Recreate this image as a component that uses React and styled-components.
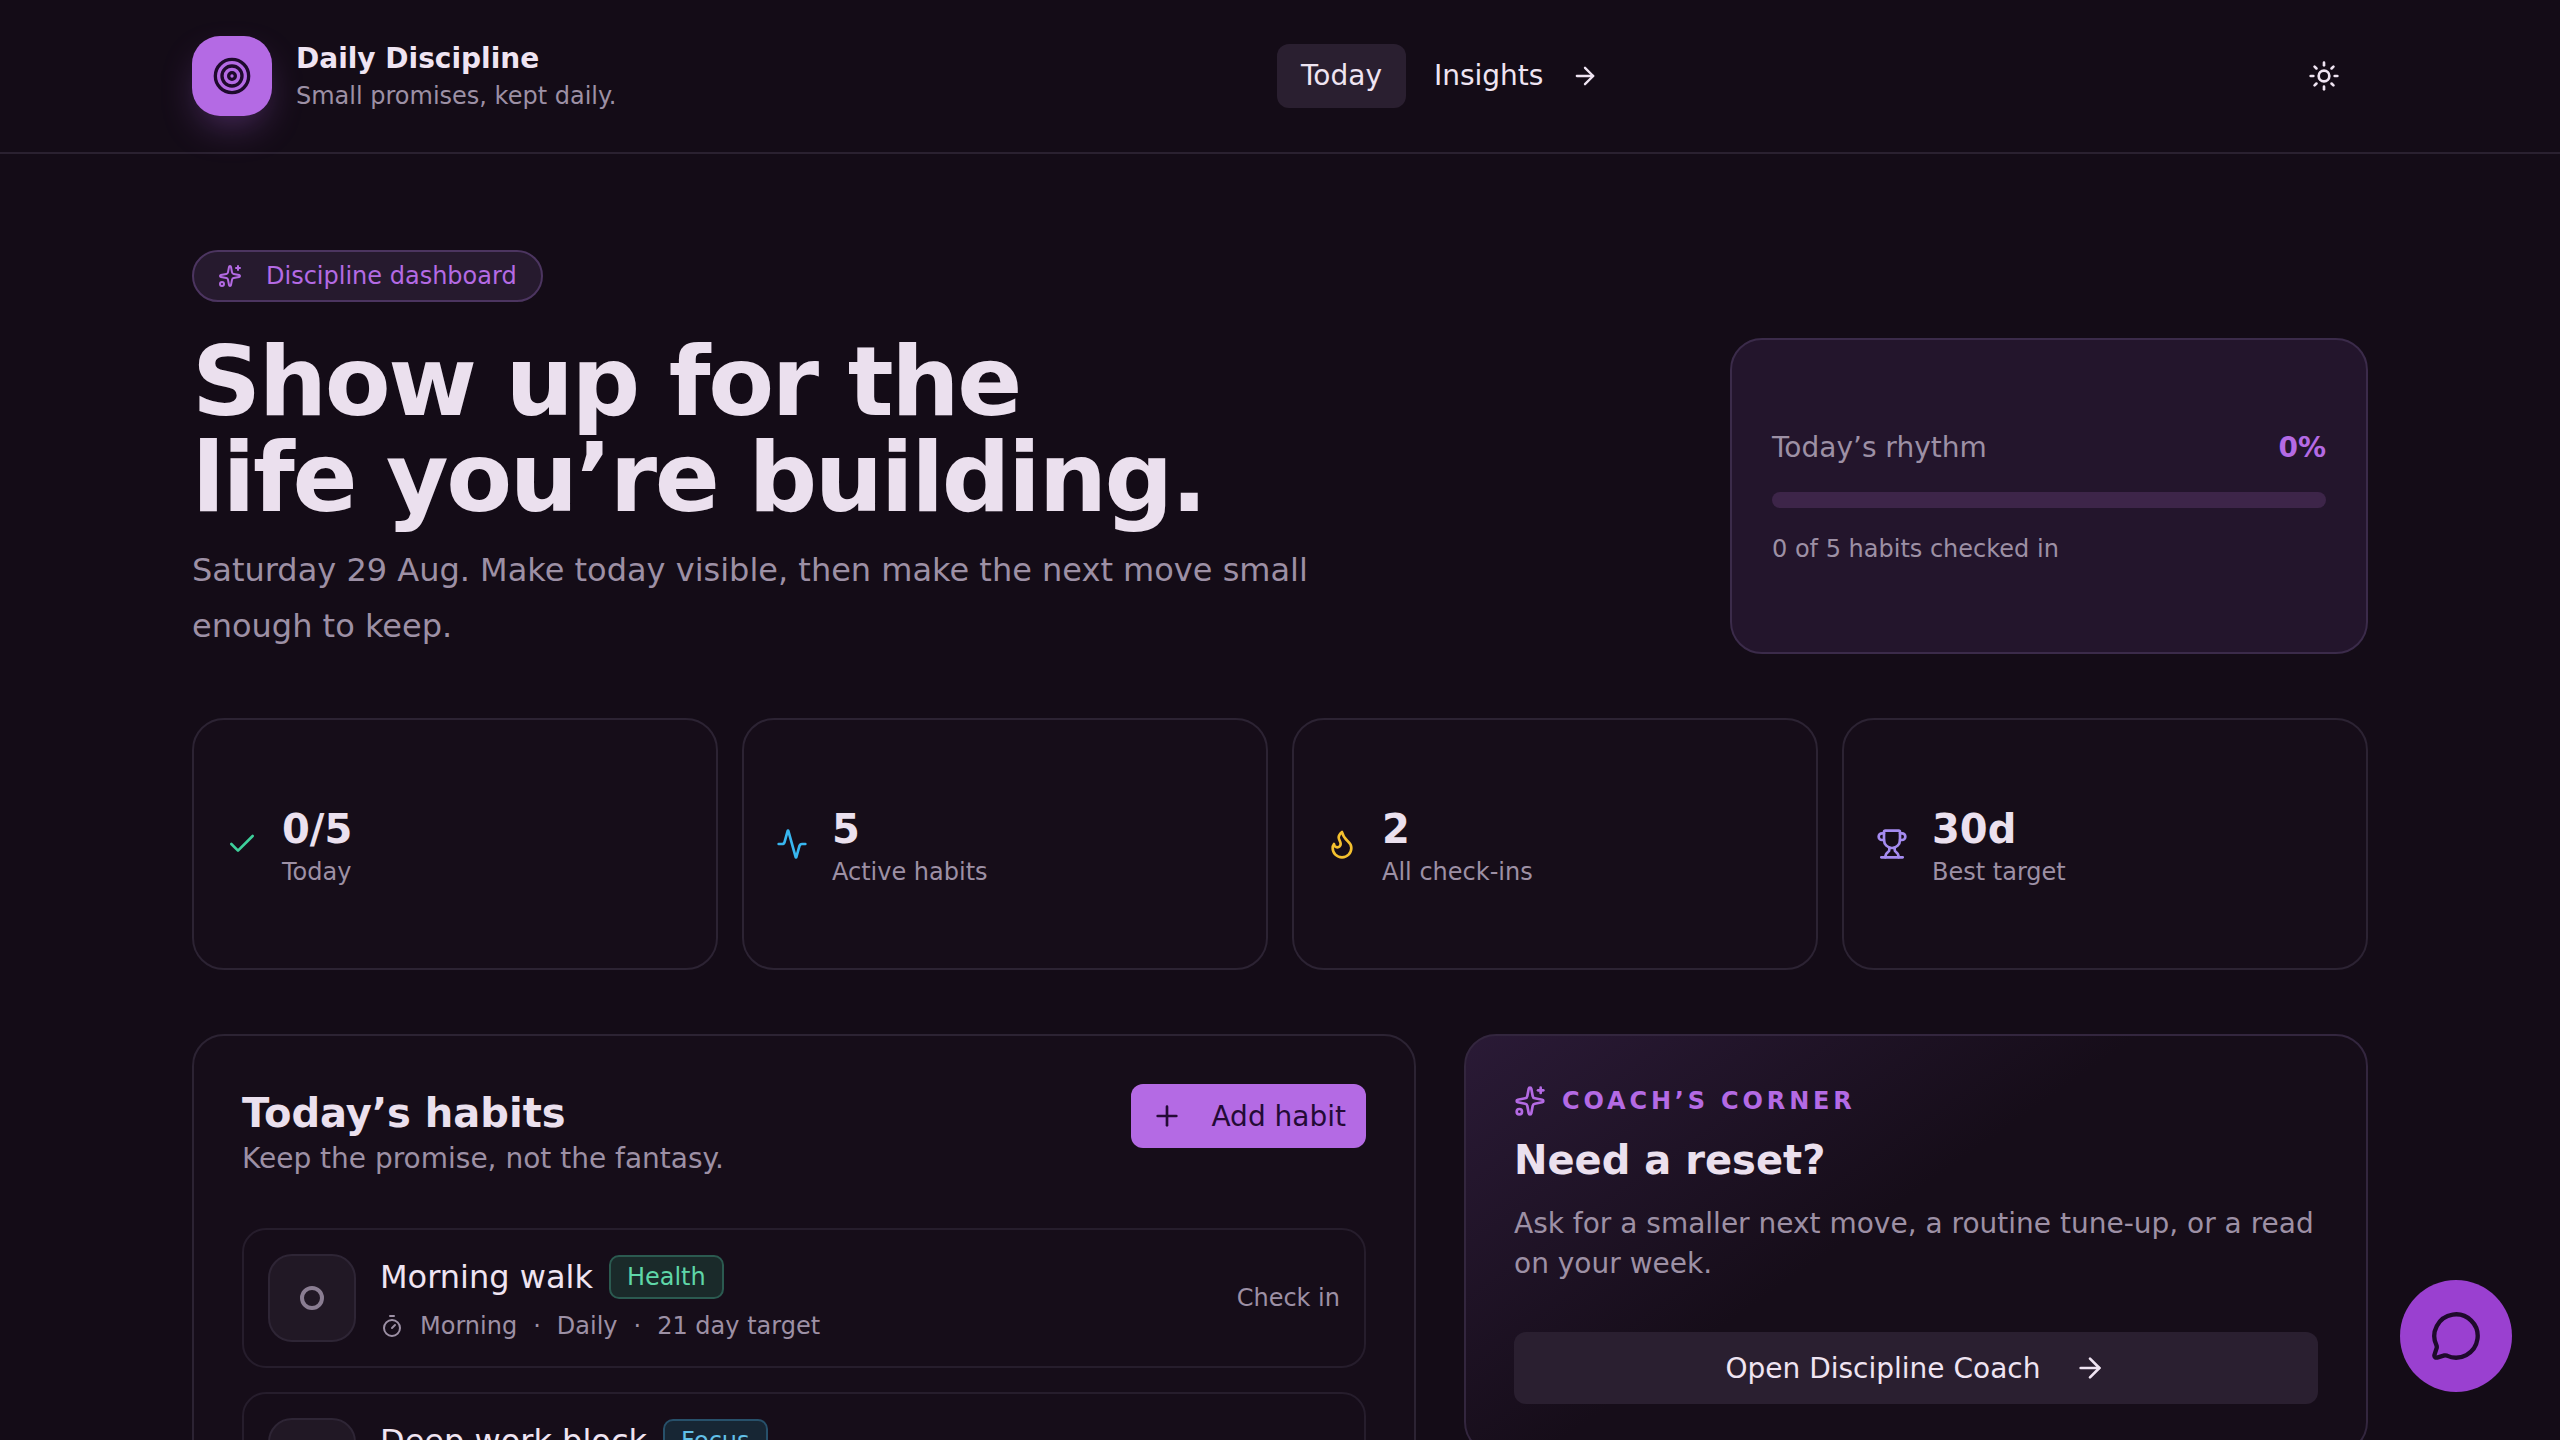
import React from 'react';
import styled, { createGlobalStyle } from 'styled-components';
import {
  Activity,
  ArrowRight,
  Check,
  Circle,
  Flame,
  MessageCircle,
  Plus,
  Sparkles,
  Sun,
  Target,
  Timer,
  Trophy,
} from 'lucide-react';

const GlobalStyle = createGlobalStyle`
  * { box-sizing: border-box; }
  html, body { margin: 0; background: #140c17; }
  body {
    color: #efe4f2;
    font-family: 'DejaVu Sans', sans-serif;
  }
`;

const Page = styled.div`
  min-height: 100vh;
  background: #140c17;
`;

const Header = styled.header`
  height: 154px;
  padding: 0 192px;
  display: flex;
  justify-content: space-between;
  align-items: center;
  border-bottom: 2px solid #2a2130;
`;

const Brand = styled.div`
  display: flex;
  align-items: center;
  gap: 24px;
`;

const LogoMark = styled.div`
  width: 80px;
  height: 80px;
  border-radius: 28px;
  background: #b46ae4;
  color: #1e0a2c;
  display: flex;
  align-items: center;
  justify-content: center;
  box-shadow: 0 16px 40px -12px rgba(178, 102, 230, 0.45);
`;

const BrandText = styled.div`
  padding-top: 2px;
  display: flex;
  flex-direction: column;
`;

const BrandName = styled.div`
  font-size: 28px;
  line-height: 38px;
  font-weight: 700;
`;

const BrandTag = styled.div`
  font-size: 24px;
  line-height: 36px;
  color: #9d90a5;
`;

const Nav = styled.nav`
  margin-left: 4px;
  display: flex;
  align-items: center;
  gap: 4px;
`;

const NavItem = styled.div`
  height: 64px;
  padding: 0 24px;
  display: flex;
  align-items: center;
  gap: 28px;
  font-size: 28px;
  line-height: 62px;
  border-radius: 12px;
  background: ${props => (props.$active ? '#2a1f30' : 'transparent')};
`;

const ThemeButton = styled.div`
  width: 88px;
  height: 80px;
  display: flex;
  align-items: center;
  justify-content: center;
`;

const Main = styled.main`
  padding: 96px 192px 96px;
`;

const Hero = styled.section`
  display: grid;
  grid-template-columns: 1fr 638px;
  align-items: end;
  gap: 48px;
`;

const HeroCopy = styled.div`
  display: flex;
  flex-direction: column;
  align-items: flex-start;
`;

const Badge = styled.div`
  height: 52px;
  padding: 0 24px;
  display: flex;
  align-items: center;
  gap: 24px;
  font-size: 24px;
  color: #b46ae4;
  background: #261a2e;
  border: 2px solid #4c3560;
  border-radius: 26px;
`;

const Headline = styled.h1`
  margin: 32px 0 0;
  font-size: 96px;
  line-height: 96px;
  font-weight: 700;
  letter-spacing: -2.4px;
  color: #ebe0ee;
`;

const Lede = styled.p`
  margin: 16px 0 0;
  max-width: 1150px;
  font-size: 32px;
  line-height: 56px;
  color: #9d90a5;
`;

const RhythmCard = styled.div`
  height: 316px;
  padding: 1px 40px 0;
  display: flex;
  flex-direction: column;
  justify-content: center;
  background: #23152c;
  border: 2px solid #3b2b4a;
  border-radius: 32px;
`;

const RhythmTop = styled.div`
  display: flex;
  justify-content: space-between;
  align-items: center;
  font-size: 28px;
  line-height: 40px;
  color: #9d90a5;
`;

const RhythmValue = styled.span`
  font-weight: 700;
  color: #b46ae4;
`;

const Track = styled.div`
  height: 16px;
  margin: 24px 0 24px;
  border-radius: 8px;
  background: #3d2549;
`;

const RhythmNote = styled.div`
  font-size: 24px;
  line-height: 34px;
  color: #9d90a5;
`;

const Stats = styled.section`
  margin-top: 64px;
  display: grid;
  grid-template-columns: repeat(4, 1fr);
  gap: 24px;
`;

const StatCard = styled.div`
  height: 252px;
  padding: 0 32px;
  display: flex;
  align-items: center;
  gap: 24px;
  background: #160d19;
  border: 2px solid #2c2333;
  border-radius: 32px;
  color: ${props => props.$tone};
`;

const StatText = styled.div`
  padding-top: 3px;
  display: flex;
  flex-direction: column;
`;

const StatValue = styled.div`
  font-size: 40px;
  line-height: 52px;
  font-weight: 700;
  color: #ebe0ee;
`;

const StatLabel = styled.div`
  font-size: 24px;
  line-height: 34px;
  color: #9d90a5;
`;

const Columns = styled.section`
  margin-top: 64px;
  display: grid;
  grid-template-columns: 1224px 904px;
  gap: 48px;
  align-items: start;
`;

const HabitsPanel = styled.div`
  padding: 48px;
  background: #160d19;
  border: 2px solid #2c2333;
  border-radius: 32px;
`;

const PanelHead = styled.div`
  display: flex;
  justify-content: space-between;
  align-items: flex-start;
  margin-bottom: 53px;
`;

const PanelTitle = styled.h2`
  margin: 0;
  font-size: 40px;
  line-height: 58px;
  font-weight: 700;
  color: #ebe0ee;
`;

const PanelSub = styled.div`
  font-size: 28px;
  line-height: 33px;
  color: #9d90a5;
`;

const AddButton = styled.div`
  height: 64px;
  padding: 0 20px;
  display: flex;
  align-items: center;
  gap: 28px;
  font-size: 28px;
  color: #240b36;
  background: #b46ae4;
  border-radius: 12px;
`;

const HabitList = styled.div`
  display: flex;
  flex-direction: column;
  gap: 24px;
`;

const HabitRow = styled.div`
  height: 140px;
  padding: 0 24px;
  display: flex;
  align-items: center;
  gap: 24px;
  border: 2px solid #261d2c;
  border-radius: 24px;
`;

const CheckBox = styled.div`
  width: 88px;
  height: 88px;
  flex-shrink: 0;
  display: flex;
  align-items: center;
  justify-content: center;
  color: #8a7d92;
  background: #211825;
  border: 2px solid #2e2535;
  border-radius: 24px;
`;

const HabitBody = styled.div`
  flex: 1;
  padding-top: 1px;
  display: flex;
  flex-direction: column;
  gap: 10px;
`;

const HabitTitle = styled.div`
  display: flex;
  align-items: center;
  gap: 16px;
  font-size: 32px;
  line-height: 44px;
`;

const Tag = styled.span`
  height: 44px;
  padding: 0 16px;
  display: flex;
  align-items: center;
  font-size: 24px;
  color: ${props => props.$color};
  background: ${props => props.$bg};
  border: 2px solid ${props => props.$line};
  border-radius: 10px;
`;

const HabitMeta = styled.div`
  display: flex;
  align-items: center;
  gap: 16px;
  font-size: 24px;
  line-height: 34px;
  color: #9d90a5;
`;

const CheckIn = styled.div`
  font-size: 24px;
  color: #9d90a5;
`;

const CoachPanel = styled.div`
  padding: 48px;
  background: linear-gradient(145deg, #2a1a36 0%, #160d19 45%, #160d19 100%);
  border: 2px solid #33263e;
  border-radius: 32px;
`;

const Eyebrow = styled.div`
  display: flex;
  align-items: center;
  gap: 16px;
  font-size: 24px;
  line-height: 34px;
  font-weight: 700;
  letter-spacing: 3.84px;
  color: #b46ae4;
`;

const CoachTitle = styled.h2`
  margin: 14px 0 0;
  font-size: 40px;
  line-height: 56px;
  font-weight: 700;
  color: #ebe0ee;
`;

const CoachText = styled.p`
  margin: 16px 0 0;
  font-size: 28px;
  line-height: 40px;
  color: #9d90a5;
`;

const CoachButton = styled.div`
  margin-top: 48px;
  height: 72px;
  display: flex;
  align-items: center;
  justify-content: center;
  gap: 34px;
  font-size: 28px;
  background: #2a1f30;
  border-radius: 12px;
`;

const ChatFab = styled.div`
  position: fixed;
  right: 48px;
  bottom: 48px;
  width: 112px;
  height: 112px;
  display: flex;
  align-items: center;
  justify-content: center;
  color: #1e0a2c;
  background: #9a40d0;
  border-radius: 50%;
`;

const stats = [
  { value: '0/5', label: 'Today', tone: '#3ecf9b', Icon: Check },
  { value: '5', label: 'Active habits', tone: '#38b6f0', Icon: Activity },
  { value: '2', label: 'All check-ins', tone: '#f4c02f', Icon: Flame },
  { value: '30d', label: 'Best target', tone: '#a58bf0', Icon: Trophy },
];

const habits = [
  {
    name: 'Morning walk',
    tag: 'Health',
    color: '#5fd6a8',
    bg: '#1a2a2a',
    line: '#2b5a50',
    slot: 'Morning',
    target: '21 day target',
  },
  {
    name: 'Deep work block',
    tag: 'Focus',
    color: '#62c0e8',
    bg: '#172634',
    line: '#27506a',
    slot: 'Morning',
    target: '30 day target',
  },
];

export default function App() {
  return (
    <Page>
      <GlobalStyle />
      <Header>
        <Brand>
          <LogoMark>
            <Target size={40} strokeWidth={2} />
          </LogoMark>
          <BrandText>
            <BrandName>Daily Discipline</BrandName>
            <BrandTag>Small promises, kept daily.</BrandTag>
          </BrandText>
        </Brand>
        <Nav>
          <NavItem $active>Today</NavItem>
          <NavItem>
            Insights
            <ArrowRight size={28} />
          </NavItem>
        </Nav>
        <ThemeButton>
          <Sun size={32} />
        </ThemeButton>
      </Header>

      <Main>
        <Hero>
          <HeroCopy>
            <Badge>
              <Sparkles size={24} />
              Discipline dashboard
            </Badge>
            <Headline>
              Show up for the
              <br />
              life you’re building.
            </Headline>
            <Lede>
              Saturday 29 Aug. Make today visible, then make the next move small
              enough to keep.
            </Lede>
          </HeroCopy>
          <RhythmCard>
            <RhythmTop>
              Today’s rhythm
              <RhythmValue>0%</RhythmValue>
            </RhythmTop>
            <Track />
            <RhythmNote>0 of 5 habits checked in</RhythmNote>
          </RhythmCard>
        </Hero>

        <Stats>
          {stats.map(({ value, label, tone, Icon }) => (
            <StatCard key={label} $tone={tone}>
              <Icon size={32} />
              <StatText>
                <StatValue>{value}</StatValue>
                <StatLabel>{label}</StatLabel>
              </StatText>
            </StatCard>
          ))}
        </Stats>

        <Columns>
          <HabitsPanel>
            <PanelHead>
              <div>
                <PanelTitle>Today’s habits</PanelTitle>
                <PanelSub>Keep the promise, not the fantasy.</PanelSub>
              </div>
              <AddButton>
                <Plus size={32} />
                Add habit
              </AddButton>
            </PanelHead>
            <HabitList>
              {habits.map(habit => (
                <HabitRow key={habit.name}>
                  <CheckBox>
                    <Circle size={24} strokeWidth={4} />
                  </CheckBox>
                  <HabitBody>
                    <HabitTitle>
                      {habit.name}
                      <Tag $color={habit.color} $bg={habit.bg} $line={habit.line}>
                        {habit.tag}
                      </Tag>
                    </HabitTitle>
                    <HabitMeta>
                      <Timer size={24} />
                      {habit.slot}
                      <span>·</span>
                      Daily
                      <span>·</span>
                      {habit.target}
                    </HabitMeta>
                  </HabitBody>
                  <CheckIn>Check in</CheckIn>
                </HabitRow>
              ))}
            </HabitList>
          </HabitsPanel>

          <CoachPanel>
            <Eyebrow>
              <Sparkles size={32} />
              COACH’S CORNER
            </Eyebrow>
            <CoachTitle>Need a reset?</CoachTitle>
            <CoachText>
              Ask for a smaller next move, a routine tune-up, or a read on your
              week.
            </CoachText>
            <CoachButton>
              Open Discipline Coach
              <ArrowRight size={32} />
            </CoachButton>
          </CoachPanel>
        </Columns>
      </Main>

      <ChatFab>
        <MessageCircle size={52} />
      </ChatFab>
    </Page>
  );
}
